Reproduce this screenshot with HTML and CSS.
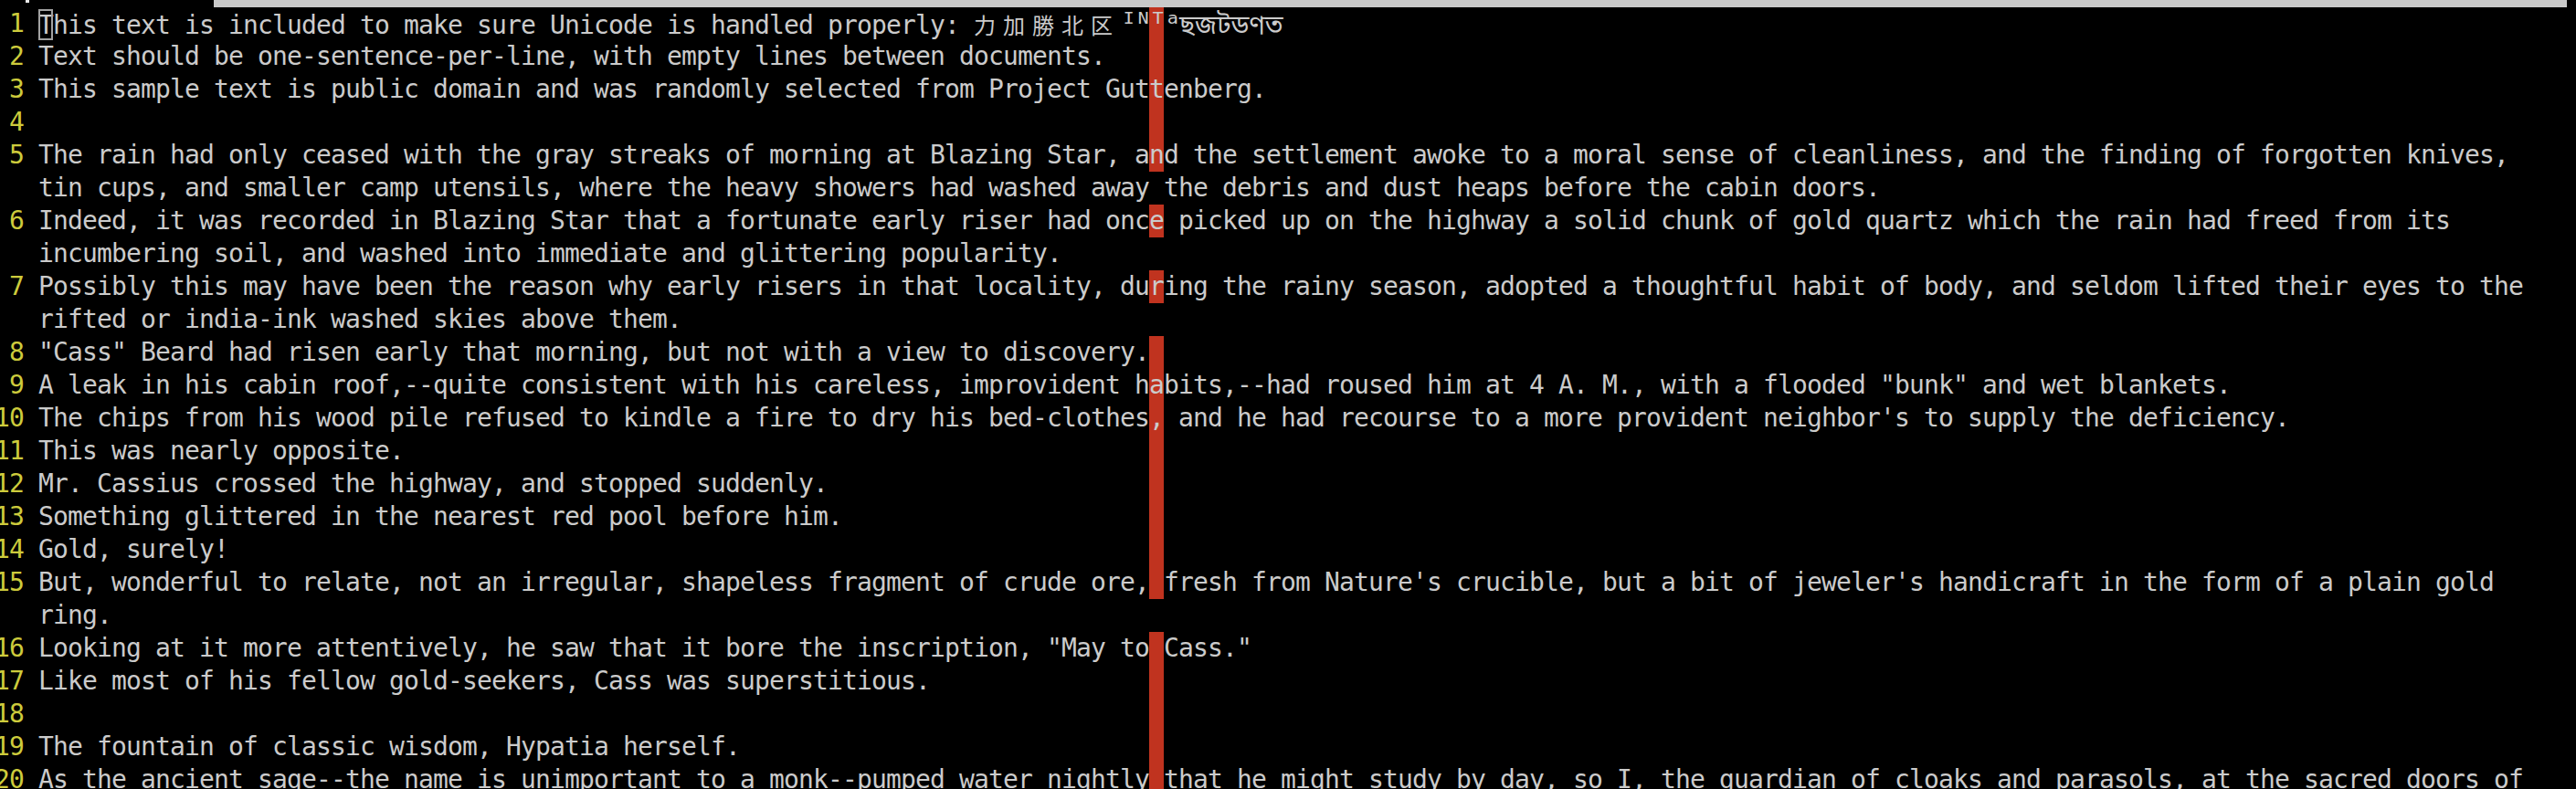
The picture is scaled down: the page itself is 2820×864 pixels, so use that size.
FILE: index.html
```html
<!DOCTYPE html>
<html lang="en">
<head>
<meta charset="utf-8">
<title>vim</title>
<link rel="stylesheet" href="styles.css">
</head>
<body>
<div class="topbar"><span class="mark"></span><span class="tab"></span></div>
<div class="screen">
<div class="row cc"><span class="ln">1</span><span class="tx"><span class="cur">T</span>his text is included to make sure Unicode is handled properly: <span class="cjk">力加勝北区</span><span class="sup">ᴵ</span><span class="sup">ᴺ</span><span class="sup">ᵀ</span><span class="sup">ᵃ</span><span class="bn">ছজটডণত</span></span></div>
<div class="row cc"><span class="ln">2</span><span class="tx">Text should be one-sentence-per-line, with empty lines between documents.</span></div>
<div class="row cc"><span class="ln">3</span><span class="tx">This sample text is public domain and was randomly selected from Project Guttenberg.</span></div>
<div class="row cc"><span class="ln">4</span><span class="tx"></span></div>
<div class="row cc"><span class="ln">5</span><span class="tx">The rain had only ceased with the gray streaks of morning at Blazing Star, and the settlement awoke to a moral sense of cleanliness, and the finding of forgotten knives,</span></div>
<div class="row"><span class="ln"></span><span class="tx">tin cups, and smaller camp utensils, where the heavy showers had washed away the debris and dust heaps before the cabin doors.</span></div>
<div class="row cc"><span class="ln">6</span><span class="tx">Indeed, it was recorded in Blazing Star that a fortunate early riser had once picked up on the highway a solid chunk of gold quartz which the rain had freed from its</span></div>
<div class="row"><span class="ln"></span><span class="tx">incumbering soil, and washed into immediate and glittering popularity.</span></div>
<div class="row cc"><span class="ln">7</span><span class="tx">Possibly this may have been the reason why early risers in that locality, during the rainy season, adopted a thoughtful habit of body, and seldom lifted their eyes to the</span></div>
<div class="row"><span class="ln"></span><span class="tx">rifted or india-ink washed skies above them.</span></div>
<div class="row cc"><span class="ln">8</span><span class="tx">"Cass" Beard had risen early that morning, but not with a view to discovery.</span></div>
<div class="row cc"><span class="ln">9</span><span class="tx">A leak in his cabin roof,--quite consistent with his careless, improvident habits,--had roused him at 4 A. M., with a flooded "bunk" and wet blankets.</span></div>
<div class="row cc"><span class="ln">10</span><span class="tx">The chips from his wood pile refused to kindle a fire to dry his bed-clothes, and he had recourse to a more provident neighbor's to supply the deficiency.</span></div>
<div class="row cc"><span class="ln">11</span><span class="tx">This was nearly opposite.</span></div>
<div class="row cc"><span class="ln">12</span><span class="tx">Mr. Cassius crossed the highway, and stopped suddenly.</span></div>
<div class="row cc"><span class="ln">13</span><span class="tx">Something glittered in the nearest red pool before him.</span></div>
<div class="row cc"><span class="ln">14</span><span class="tx">Gold, surely!</span></div>
<div class="row cc"><span class="ln">15</span><span class="tx">But, wonderful to relate, not an irregular, shapeless fragment of crude ore, fresh from Nature's crucible, but a bit of jeweler's handicraft in the form of a plain gold</span></div>
<div class="row"><span class="ln"></span><span class="tx">ring.</span></div>
<div class="row cc"><span class="ln">16</span><span class="tx">Looking at it more attentively, he saw that it bore the inscription, "May to Cass."</span></div>
<div class="row cc"><span class="ln">17</span><span class="tx">Like most of his fellow gold-seekers, Cass was superstitious.</span></div>
<div class="row cc"><span class="ln">18</span><span class="tx"></span></div>
<div class="row cc"><span class="ln">19</span><span class="tx">The fountain of classic wisdom, Hypatia herself.</span></div>
<div class="row cc"><span class="ln">20</span><span class="tx">As the ancient sage--the name is unimportant to a monk--pumped water nightly that he might study by day, so I, the guardian of cloaks and parasols, at the sacred doors of</span></div>
</div>
</body>
</html>
```
FILE: styles.css
```css
html, body {
  margin: 0;
  padding: 0;
  background: #000;
  overflow: hidden;
  height: 864px;
}

.topbar {
  display: flex;
  height: 8px;
  align-items: flex-start;
}

.mark {
  margin-left: 28px;
  width: 4px;
  height: 3px;
  background: #e8e8e8;
}

.tab {
  flex: 1;
  height: 8px;
  margin-left: 202px;
  margin-right: 10px;
  background: #c9c9c9;
}

.screen {
  margin-left: -6px;
  font-family: "DejaVu Sans Mono", "Liberation Mono", monospace;
  font-size: 28px;
  letter-spacing: -0.857px;
  color: #cbcbcb;
}

.row {
  display: flex;
  height: 36px;
  line-height: 36px;
  white-space: pre;
}

.row.cc {
  background-image: linear-gradient(90deg, transparent 1264px, #c0331f 1264px, #c0331f 1280px, transparent 1280px);
}

.ln {
  width: 32px;
  margin-right: 16px;
  text-align: right;
  color: #cdcb3c;
  flex: none;
}

.tx {
  flex: none;
}

.cur {
  position: relative;
}

.cur::after {
  content: "";
  position: absolute;
  left: 0;
  top: -1px;
  width: 16px;
  height: 34px;
  box-sizing: border-box;
  border: 2px solid #a2a2a2;
}

.cjk {
  font-family: "Noto Sans CJK JP", "Noto Sans CJK SC", sans-serif;
  font-size: 24px;
  letter-spacing: 8px;
}

.sup {
  display: inline-block;
  width: 16px;
  text-align: center;
  font-size: 32px;
  letter-spacing: 0;
}

.bn {
  display: inline-block;
  padding-left: 1px;
  font-family: "Noto Sans Bengali", "Lohit Bengali", "FreeSans", "Noto Sans", sans-serif;
  font-size: 28px;
  letter-spacing: 0;
}
```
